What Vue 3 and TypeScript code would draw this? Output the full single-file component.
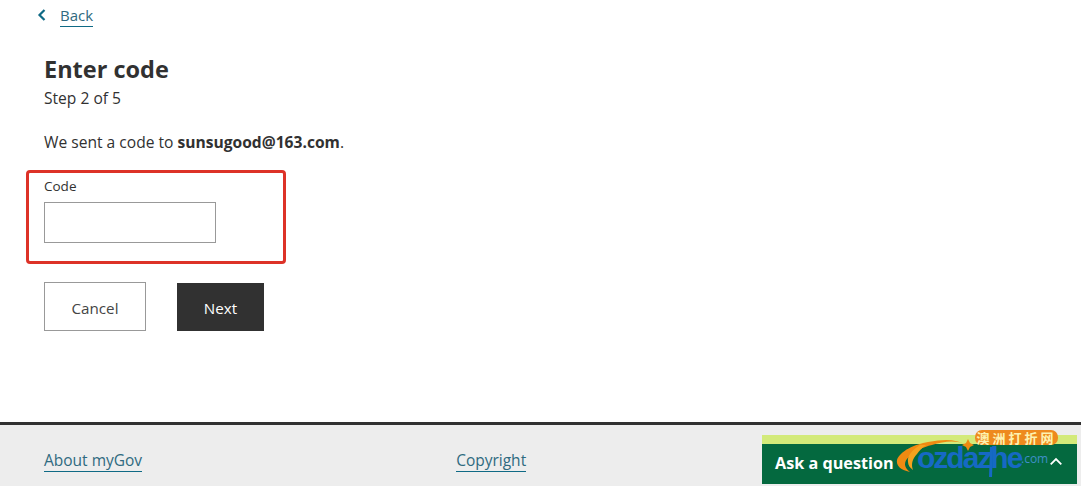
<script setup lang="ts">
const email: string = 'sunsugood@163.com'
</script>

<template>
  <div class="page">
    <main class="main">
      <a class="back" href="#">
        <svg class="chev" width="9" height="12" viewBox="0 0 9 12"><path d="M7.5 1 2.5 6l5 5" fill="none" stroke="#0f6a85" stroke-width="2.2" /></svg>
        <span class="link">Back</span>
      </a>
      <h1 class="title">Enter code</h1>
      <p class="step">Step 2 of 5</p>
      <p class="sent">We sent a code to <strong>{{ email }}</strong>.</p>
      <div class="mark">
        <label class="label" for="code">Code</label>
        <input id="code" class="input" type="text" />
      </div>
      <div class="actions">
        <button class="btn cancel" type="button">Cancel</button>
        <button class="btn next" type="button">Next</button>
      </div>
    </main>
    <footer class="footer">
      <a class="foot-link about" href="#">About myGov</a>
      <a class="foot-link" href="#">Copyright</a>
      <div class="ask">
        <div class="ask-strip"></div>
        <div class="ask-bar">
          <span class="ask-text">Ask a question</span>
          <svg class="caret" width="12" height="8" viewBox="0 0 12 8"><path d="M.7 7.3 6 2l5.3 5.3" fill="none" stroke="#fff" stroke-width="1.8" /></svg>
        </div>
        <div class="wm">
          <svg class="swoosh" width="150" height="46" viewBox="0 0 150 46">
            <path d="M33 9C20 11 5 18 2 27c-1 5 3 10 13 12C8 34 9 28 14 24 20 18 28 14 37 12 50 8 62 7 72 12 60 6 50 6 33 9Z" fill="#f08a12" />
            <path d="M25 12C17 17 12 23 13 29c0 3 2 6 5 8-2-5-1-11 4-16 2-3 5-6 9-9Z" fill="#f6a21e" />
            <path d="M73 6l2 4 4 2-4 2-2 4-2-4-4-2 4-2Z" fill="#f08a12" />
            <path d="M95 14h3L97 44h-3Z" fill="#1669c4" />
          </svg>
          <span class="wm-logo">ozdazhe</span><span class="wm-com">.com</span>
          <span class="wm-badge">澳洲打折网</span>
        </div>
      </div>
    </footer>
  </div>
</template>

<style>
html, body { margin: 0; background: #fff; overflow: hidden; }
</style>

<style scoped>
.page {
  width: 1081px;
  height: 486px;
  display: flex;
  flex-direction: column;
  font-family: "Open Sans", "Noto Sans", sans-serif;
  color: #313131;
  font-size: 15.6px;
  overflow: hidden;
}
.main {
  height: 422px;
  box-sizing: border-box;
  padding: 4px 0 0 44px;
}
.back {
  display: flex;
  align-items: center;
  gap: 14px;
  margin-left: -7px;
  height: 23px;
  text-decoration: none;
}
.chev { margin-top: -1px; }
.link {
  color: #2f6a80;
  font-size: 15px;
  line-height: 22px;
  border-bottom: 1px solid #0f6a85;
}
.title {
  margin: 27px 0 0;
  font-size: 23.5px;
  line-height: 30px;
  font-weight: 700;
}
.step {
  margin: 4px 0 0;
  line-height: 20px;
}
.sent {
  margin: 24px 0 0;
  line-height: 20px;
}
.mark {
  box-sizing: border-box;
  width: 260px;
  height: 94px;
  margin: 18px 0 0 -18px;
  padding: 5px 0 0 15px;
  border: 3px solid #dd3228;
  border-radius: 4px;
}
.label {
  display: block;
  font-size: 13.5px;
  line-height: 17px;
}
.input {
  display: block;
  box-sizing: border-box;
  width: 172px;
  height: 41px;
  margin-top: 7px;
  border: 1px solid #999;
  border-radius: 0;
  background: #fff;
  outline: none;
}
.actions {
  display: flex;
  align-items: flex-end;
  gap: 31px;
  margin-top: 18px;
}
.btn {
  box-sizing: border-box;
  height: 49px;
  padding: 2px 0 0;
  font-family: inherit;
  font-size: 15.2px;
  border-radius: 0;
}
.cancel {
  width: 102px;
  background: #fff;
  color: #444;
  border: 1px solid #999;
}
.next {
  width: 87px;
  height: 48px;
  background: #313131;
  color: #fff;
  border: 0;
}
.footer {
  position: relative;
  flex: 1;
  display: flex;
  align-items: flex-start;
  gap: 314px;
  box-sizing: border-box;
  padding: 24px 0 0 44px;
  background: #ededed;
  border-top: 3px solid #313131;
}
.foot-link {
  color: #2f6a80;
  font-size: 15.5px;
  line-height: 22px;
  text-decoration: none;
  border-bottom: 1px solid #0f6a85;
}
.ask {
  position: absolute;
  left: 762px;
  top: 10px;
  width: 315px;
  height: 49px;
}
.ask-strip {
  height: 9px;
  background: #d3ea7a;
}
.ask-bar {
  height: 40px;
  display: flex;
  align-items: center;
  justify-content: space-between;
  box-sizing: border-box;
  padding: 0 15px 3px 13px;
  background: #04693f;
  color: #fff;
}
.ask-text {
  font-size: 16.2px;
  font-weight: 700;
}
.caret { margin-top: -3px; }
.wm {
  position: absolute;
  left: 133px;
  top: -4px;
  width: 160px;
  height: 50px;
}
.swoosh {
  position: absolute;
  left: 0;
  top: 2px;
}
.wm-logo {
  position: absolute;
  left: 22px;
  top: 15px;
  font-family: "Liberation Sans", sans-serif;
  font-size: 30px;
  line-height: 24px;
  font-weight: 700;
  letter-spacing: -2px;
  color: #1669c4;
}
.wm-com {
  position: absolute;
  left: 126px;
  top: 20px;
  font-size: 12px;
  line-height: 16px;
  color: #3f8fc8;
}
.wm-badge {
  position: absolute;
  left: 80px;
  top: -1px;
  width: 83px;
  height: 15px;
  border-radius: 7px;
  background: #ee8a1e;
  color: #fdf2b0;
  font-family: "Noto Sans CJK SC", sans-serif;
  font-size: 13px;
  font-weight: 700;
  line-height: 15px;
  text-align: center;
  letter-spacing: 3px;
}
</style>
